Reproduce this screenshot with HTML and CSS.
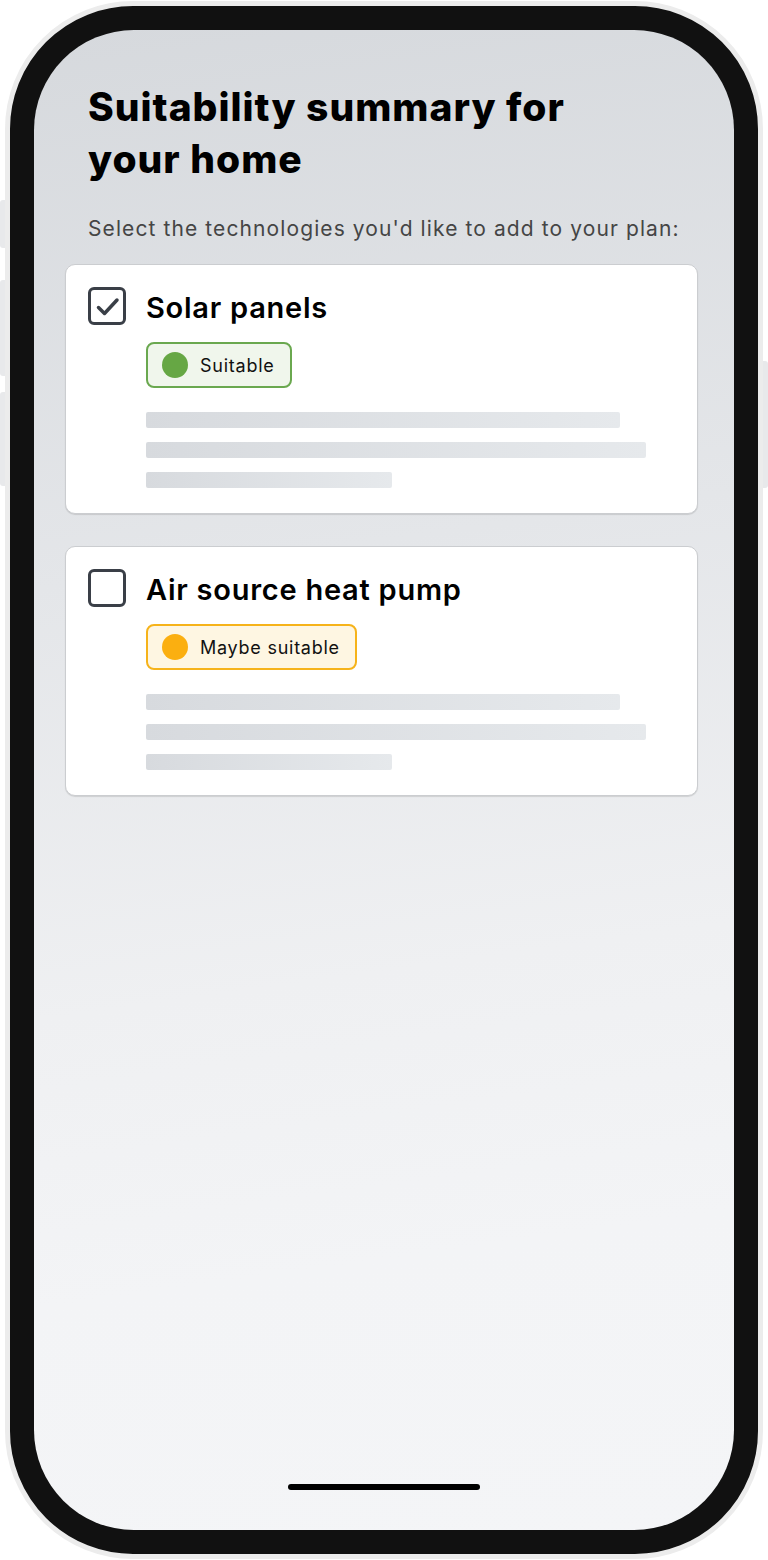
FILE: index.html
```html
<!DOCTYPE html>
<html lang="en">
<head>
<meta charset="utf-8">
<title>Suitability summary</title>
<link rel="stylesheet" href="styles.css">
</head>
<body>
<div class="device">
  <span class="btn btn-l1"></span>
  <span class="btn btn-l2"></span>
  <span class="btn btn-l3"></span>
  <span class="btn btn-r1"></span>
  <div class="bezel">
    <div class="screen">
      <h1 class="title">Suitability summary for your home</h1>
      <p class="subtitle">Select the technologies you'd like to add to your plan:</p>
      <div class="cards">
        <div class="card">
          <div class="card-head">
            <span class="checkbox checked">
              <svg viewBox="0 0 30 30" width="30" height="30"><path d="M6.5 16.5 L12.5 22.5 L25 9" fill="none" stroke="#3a3f47" stroke-width="3.5" stroke-linecap="round" stroke-linejoin="round"/></svg>
            </span>
            <h2 class="card-title">Solar panels</h2>
          </div>
          <div class="card-body">
            <span class="badge badge-green"><span class="dot"></span>Suitable</span>
            <div class="skeleton">
              <span class="sk sk-1"></span>
              <span class="sk sk-2"></span>
              <span class="sk sk-3"></span>
            </div>
          </div>
        </div>
        <div class="card">
          <div class="card-head">
            <span class="checkbox"></span>
            <h2 class="card-title">Air source heat pump</h2>
          </div>
          <div class="card-body">
            <span class="badge badge-amber"><span class="dot"></span>Maybe suitable</span>
            <div class="skeleton">
              <span class="sk sk-1"></span>
              <span class="sk sk-2"></span>
              <span class="sk sk-3"></span>
            </div>
          </div>
        </div>
      </div>
      <div class="spacer"></div>
      <div class="home-bar"></div>
    </div>
  </div>
</div>
</body>
</html>
```

FILE: styles.css
```css
* { box-sizing: border-box; }
html, body { margin: 0; padding: 0; background: #ffffff; }
body {
  width: 768px;
  height: 1560px;
  font-family: Inter, "Liberation Sans", sans-serif;
  color: #000;
  padding: 1px 5px 0 5px;
}
.device {
  position: relative;
  width: 758px;
  height: 1558px;
}
.btn {
  position: absolute;
  background: #e8e9eb;
  border-radius: 3px;
}
.btn-l1 { left: -5px; top: 199px; width: 12px; height: 48px; }
.btn-l2 { left: -5px; top: 279px; width: 12px; height: 96px; }
.btn-l3 { left: -5px; top: 391px; width: 12px; height: 94px; }
.btn-r1 { right: -5px; top: 360px; width: 12px; height: 127px; }
.bezel {
  position: relative;
  width: 100%;
  height: 100%;
  background: #111111;
  border: 5px solid #ececec;
  border-radius: 128px;
  padding: 24px;
}
.screen {
  width: 700px;
  height: 1500px;
  border-radius: 100px;
  background: linear-gradient(172deg, #d6d9dd 0%, #e4e6e9 35%, #eff0f2 62%, #f3f4f6 80%, #f4f5f7 100%);
  padding: 51px 36px 0 31px;
  display: flex;
  flex-direction: column;
  overflow: hidden;
}
.title {
  margin: 0 0 0 23px;
  font-size: 39px;
  line-height: 52px;
  font-weight: 800;
  letter-spacing: 1px;
  width: 520px;
}
.subtitle {
  margin: 30px 0 0 23px;
  font-size: 21px;
  line-height: 28px;
  color: #454545;
  letter-spacing: 1.1px;
}
.cards {
  margin-top: 21px;
  display: flex;
  flex-direction: column;
  gap: 32px;
}
.card {
  background: #ffffff;
  border: 1px solid #cbcdd0;
  border-radius: 10px;
  box-shadow: 0 1px 1px rgba(0, 0, 0, 0.12);
  height: 250px;
  padding: 22px 24px 0 22px;
}
.card-head {
  display: flex;
  align-items: center;
  gap: 20px;
  height: 38px;
}
.checkbox {
  width: 38px;
  height: 38px;
  border: 3.5px solid #3a3f47;
  border-radius: 6px;
  display: flex;
  align-items: center;
  justify-content: center;
  flex-shrink: 0;
}
.card-title {
  margin: 0;
  font-size: 29px;
  font-weight: 600;
  letter-spacing: 0.75px;
  line-height: 34px;
  position: relative;
  top: 2px;
}
.card-body {
  margin-left: 58px;
  padding-top: 17px;
  display: flex;
  flex-direction: column;
  align-items: flex-start;
}
.badge {
  height: 46px;
  border-radius: 8px;
  border: 2px solid;
  display: inline-flex;
  align-items: center;
  padding: 0 15px 0 14px;
  font-size: 18px;
  letter-spacing: 0.75px;
  color: #111;
}
.badge .dot {
  width: 26px;
  height: 26px;
  border-radius: 50%;
  margin-right: 12px;
}
.badge-green { border-color: #6aa84f; background: #f0f6ec; }
.badge-green .dot { background: #66a744; }
.badge-amber { border-color: #f6b31a; background: #fef6e2; }
.badge-amber .dot { background: #fbaf10; }
.skeleton {
  margin-top: 24px;
  display: flex;
  flex-direction: column;
  gap: 14px;
}
.sk {
  display: block;
  height: 16px;
  border-radius: 2px;
  background: linear-gradient(90deg, #d7dade, #e6e9ec);
}
.sk-1 { width: 474px; }
.sk-2 { width: 500px; }
.sk-3 { width: 246px; }
.spacer { flex: 1; }
.home-bar {
  align-self: center;
  width: 192px;
  height: 6px;
  border-radius: 3px;
  background: #000;
  margin: 0 0 40px 5px;
}
```
